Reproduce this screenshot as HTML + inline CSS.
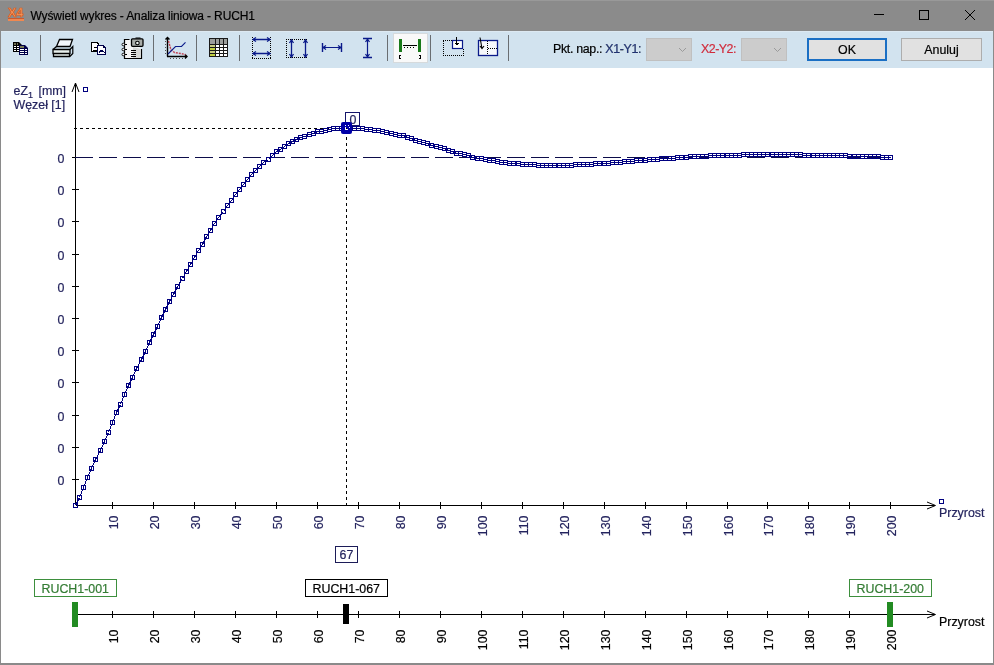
<!DOCTYPE html>
<html><head><meta charset="utf-8"><style>
html,body{margin:0;padding:0}
body{width:994px;height:665px;overflow:hidden;position:relative;background:#8a8a8a;font-family:"Liberation Sans",sans-serif}
#tb{position:absolute;left:1px;top:31px;width:992px;height:37px;background:#d2e3ef;border-top:1px solid #dde9f2;box-sizing:border-box}
#ca{position:absolute;left:1px;top:68px;width:992px;height:595px;background:#fff}
#ttl{position:absolute;left:0;top:0;width:994px;height:31px;background:#8b8b8b;border-top:1px solid #999;box-sizing:border-box}
svg{position:absolute;left:0;top:0;will-change:transform}
svg text{font-family:"Liberation Sans",sans-serif;font-size:12.4px}
.btn{position:absolute;box-sizing:border-box;background:#e1e1e1;font-size:12px;text-align:center;color:#000}
</style></head><body>
<div id="ttl"></div>
<div id="tb"></div>
<div id="ca"></div>
<svg width="994" height="665" viewBox="0 0 994 665">
<!-- title -->
<text x="30.5" y="20" fill="#000" style="font-size:12px;letter-spacing:-0.12px" stroke="#000" stroke-width="0.2">Wyświetl wykres - Analiza liniowa - RUCH1</text>
<path d="M874 14.5h10M919.5 10.5h9v9h-9zM965 10l10 10M975 10l-10 10" stroke="#000" fill="none" shape-rendering="crispEdges"/>
<text x="8" y="16.5" fill="#f59a60" stroke="#d85a20" stroke-width="0.7" style="font-size:12.5px;font-weight:bold">X4</text>
<rect x="8" y="18" width="16" height="1" fill="#c85a30"/><rect x="8" y="19" width="16" height="2" fill="#f08850"/>
<!-- icon1 spreadsheet copy -->
<path d="M13 42h6l3 3v7h-9z" fill="#000"/>
<path d="M14 43h2v2h-2zM17 43h1v2h-1z" fill="#6e6e50"/>
<path d="M14 46h2v1h-2zM17 46h2v1h-2zM14 48h2v1h-2zM17 48h2v1h-2zM14 50h2v1h-2zM17 50h2v1h-2z" fill="#fff"/>
<path d="M19 45h6l3 3v7h-9z" fill="#000048"/>
<path d="M20 46h3v2h-3zM23 46h1v2h-1z" fill="#7a7a50"/>
<path d="M20 49h3v1h-3zM23 49h1v1h-1zM25 49h2v1h-2zM20 51h3v1h-3zM23 51h1v1h-1zM25 51h2v1h-2zM20 53h3v1h-3zM23 53h1v1h-1zM25 53h2v1h-2z" fill="#fff"/>
<!-- icon2 printer -->
<path d="M59.5 39.5h13l-2.5 7h-13.5z" fill="#f4f8fc" stroke="#000" stroke-width="1.3"/>
<path d="M53 49.5h17v4h-17zM53.5 53.5h16v3h-16z" fill="#e8f0ec" stroke="#000" stroke-width="1.3"/>
<path d="M53 49.5l3.5-3M70 49.5l2.8-3v7l-3 3" fill="none" stroke="#000" stroke-width="1.2"/>
<!-- icon3 copy picture -->
<path d="M91.5 42.5h5.5l1.5 1.5v7.5h-7z" fill="#fff" stroke="#000" stroke-width="1.1" shape-rendering="crispEdges"/>
<path d="M94 47.5h3M93 50h4" stroke="#000" shape-rendering="crispEdges"/>
<path d="M97.5 45.5h5.5l2.5 2.5v6.5h-8z" fill="#fff" stroke="#000048" stroke-width="1.1" shape-rendering="crispEdges"/>
<path d="M100 50.5h3M99 52.5l2-1.5h2l2 1.5" stroke="#000048" fill="none" shape-rendering="crispEdges"/>
<rect x="103" y="47" width="1" height="1" fill="#000048"/>
<!-- icon4 notebook camera -->
<path d="M129.5 39.5h-5v19h17v-9.5" fill="#f6f6f6" stroke="#000" stroke-width="1.2"/>
<path d="M133 47v11h8v-9z" fill="#d6d8d6"/>
<path d="M123 44.5h4M123 49.5h4M123 54.5h4" stroke="#000" stroke-width="1.1"/>
<circle cx="123.3" cy="44.5" r="1.3" fill="#fff" stroke="#000" stroke-width="0.9"/><circle cx="123.3" cy="49.5" r="1.3" fill="#fff" stroke="#000" stroke-width="0.9"/><circle cx="123.3" cy="54.5" r="1.3" fill="#fff" stroke="#000" stroke-width="0.9"/>
<path d="M130.5 50.5h5M130.5 52.5h5M130.5 54.5h5M130.5 56.5h5" stroke="#000" shape-rendering="crispEdges"/>
<rect x="131.5" y="38.8" width="11.5" height="7.5" rx="1" fill="#a8aca8" stroke="#000" stroke-width="1.3"/>
<path d="M135.5 38.5h5v-1h-5z" fill="#000"/>
<circle cx="137.4" cy="43" r="1.8" fill="#f0f4f0" stroke="#000" stroke-width="1.1"/>
<!-- icon5 chart -->
<path d="M167.5 37.5v19M167 56.5h20M165.5 39.5l2-2 2 2M185 54.5l2 2-2 2" stroke="#000" stroke-width="1.4" fill="none"/>
<path d="M165 41.5h1M165 44.5h1M165 47.5h1M165 50.5h1M165 53.5h1M170.5 58v1M173.5 58v1M176.5 58v1M179.5 58v1M182.5 58v1" stroke="#555" shape-rendering="crispEdges"/>
<path d="M168.5 41l2.5 9 3.5 2.5 6 1 5 1" stroke="#c04050" stroke-width="1.4" fill="none" stroke-dasharray="2 1"/>
<path d="M168 54l7.5-7.5h6l4-4.2" stroke="#0a1a8a" stroke-width="1.1" fill="none"/>
<!-- icon6 grid -->
<rect x="209" y="38" width="19" height="19" fill="#1a1a1a"/>
<path d="M210 39h5v5h-5zM216 39h3v5h-3zM220 39h3v5h-3zM224 39h3v5h-3z" fill="#9c9e9c"/>
<path d="M210 45h5v2h-5zM210 51h5v2h-5z" fill="#c8cc80"/>
<path d="M210 48h5v2h-5zM210 54h5v2h-5z" fill="#c0d040"/>
<path d="M216 45h3v2h-3zM220 45h3v2h-3zM224 45h3v2h-3zM216 48h3v2h-3zM220 48h3v2h-3zM224 48h3v2h-3zM216 51h3v2h-3zM220 51h3v2h-3zM224 51h3v2h-3zM216 54h3v2h-3zM220 54h3v2h-3zM224 54h3v2h-3z" fill="#fff"/>
<!-- icon7 dotted sq horiz arrows -->
<path d="M252.5 37v22M270.5 37v22M252 58.5h19" stroke="#000" stroke-dasharray="1 1" shape-rendering="crispEdges"/>
<path d="M253 39.5h17M253 53.5h17" stroke="#0a1a8a" stroke-width="1.3"/>
<path d="M256 37.5l-3 2 3 2M267 37.5l3 2-3 2M256 51.5l-3 2 3 2M267 51.5l3 2-3 2" stroke="#0a1a8a" stroke-width="1.3" fill="none"/>
<!-- icon8 dotted sq vert arrows -->
<path d="M286.5 39v19M286 39.5h22M286 57.5h22" stroke="#000" stroke-dasharray="1 1" shape-rendering="crispEdges"/>
<path d="M291.5 40v17M305.5 40v17" stroke="#0a1a8a" stroke-width="1.3"/>
<path d="M289.5 43l2-3 2 3M289.5 54l2 3 2-3M303.5 43l2-3 2 3M303.5 54l2 3 2-3" stroke="#0a1a8a" stroke-width="1.3" fill="none"/>
<!-- icon9 horiz measure -->
<path d="M322.5 43v9M341.5 43v9" stroke="#0a1a8a" stroke-width="1.4"/>
<path d="M323 47.5h18M326 45.5l-3 2 3 2M338 45.5l3 2-3 2" stroke="#0a1a8a" stroke-width="1.2" fill="none"/>
<!-- icon10 vert measure -->
<path d="M363 38.5h9M363 57.5h9" stroke="#0a1a8a" stroke-width="1.4"/>
<path d="M367.5 39v18M365.5 42l2-3 2 3M365.5 54l2 3 2-3" stroke="#0a1a8a" stroke-width="1.2" fill="none"/>
<!-- icon11 pressed -->
<rect x="393.5" y="33.5" width="34" height="29" fill="#f9f9f9" stroke="#d6dadc" shape-rendering="crispEdges"/>
<rect x="399" y="39" width="3" height="13" fill="#1a7a1a"/>
<rect x="418" y="39" width="3" height="13" fill="#1a7a1a"/>
<path d="M403 45.5h14" stroke="#000" shape-rendering="crispEdges"/>
<path d="M404 47h1v1h-1zM407 47h1v1h-1zM410 47h1v1h-1zM413 47h1v1h-1z" fill="#000"/>
<path d="M401 55.5h-1.5v3h1.5M418.5 55.5h1.5v3h-1.5" stroke="#000" fill="none" shape-rendering="crispEdges"/>
<!-- icon12 -->
<path d="M443.5 41v15M443 55.5h20M463 49v7" stroke="#000" stroke-dasharray="1 1" shape-rendering="crispEdges"/>
<path d="M443 40.5h9" stroke="#000" stroke-dasharray="1 1" shape-rendering="crispEdges"/>
<rect x="452.5" y="40.5" width="10" height="8" fill="#fff" stroke="#0a1a8a" stroke-width="1.2"/>
<path d="M456.5 37v8M454.5 43.5h4M455.5 44.5h2" stroke="#000" fill="none" shape-rendering="crispEdges"/>
<!-- icon13 -->
<rect x="478.5" y="40.5" width="19" height="15" fill="#f6f8fc" stroke="#0a1a8a" stroke-width="1.3"/>
<path d="M487.5 41v14M488 48.5h9" stroke="#000" stroke-dasharray="1 1" shape-rendering="crispEdges"/>
<path d="M480 37.5l2 11M480 46l2 2.5 2-2.5" stroke="#000" stroke-width="1.1" fill="none"/>

<!-- separators -->
<path d="M40.5 35v26M153.5 35v26M196.5 35v26M239.5 35v26M387.5 35v26M430.5 35v26M508.5 35v26" stroke="#6a6e72" shape-rendering="crispEdges"/>
<!-- combo + labels -->
<text x="553" y="52.5" fill="#000" style="letter-spacing:-0.32px" stroke="#000" stroke-width="0.2">Pkt. nap.: <tspan fill="#263c8e">X1-Y1:</tspan></text>
<rect x="646.5" y="38.5" width="45" height="22" fill="#cccccc" stroke="#c0c0c0" shape-rendering="crispEdges"/>
<path d="M679 48l3.5 3.5L686 48" stroke="#9a9a9a" fill="none"/>
<text x="701" y="52.5" fill="#d02c3c" style="letter-spacing:-0.5px" stroke="#d02c3c" stroke-width="0.2">X2-Y2:</text>
<rect x="741.5" y="38.5" width="45" height="22" fill="#cccccc" stroke="#c0c0c0" shape-rendering="crispEdges"/>
<path d="M774 48l3.5 3.5L781 48" stroke="#9a9a9a" fill="none"/>
<rect x="808" y="39" width="78" height="21" fill="#e1e1e1" stroke="#1a6fc4" stroke-width="2"/>
<text x="847" y="54" text-anchor="middle" fill="#000" stroke="#000" stroke-width="0.2">OK</text>
<rect x="901.5" y="38.5" width="80" height="22" fill="#e1e1e1" stroke="#adadad" shape-rendering="crispEdges"/>
<text x="941.5" y="54" text-anchor="middle" fill="#000" stroke="#000" stroke-width="0.2">Anuluj</text>
<path d="M75.5 505V84M75.5 505.5H935" stroke="#000" stroke-width="1" fill="none" shape-rendering="crispEdges"/>
<path d="M72 92L75.5 83L79 92" stroke="#000" fill="none"/>
<path d="M927 502L935.5 505.5L927 509" stroke="#000" fill="none"/>
<path d="M72 157.5h7M72 189.5h7M72 221.5h7M72 254.5h7M72 286.5h7M72 318.5h7M72 350.5h7M72 382.5h7M72 415.5h7M72 447.5h7M72 479.5h7" stroke="#000" shape-rendering="crispEdges"/>
<path d="M112.5 502v7M153.5 502v7M194.5 502v7M235.5 502v7M276.5 502v7M317.5 502v7M358.5 502v7M399.5 502v7M440.5 502v7M481.5 502v7M522.5 502v7M563.5 502v7M604.5 502v7M645.5 502v7M686.5 502v7M727.5 502v7M767.5 502v7M808.5 502v7M849.5 502v7M890.5 502v7M112.5 611v7M153.5 611v7M194.5 611v7M235.5 611v7M276.5 611v7M317.5 611v7M358.5 611v7M399.5 611v7M440.5 611v7M481.5 611v7M522.5 611v7M563.5 611v7M604.5 611v7M645.5 611v7M686.5 611v7M727.5 611v7M767.5 611v7M808.5 611v7M849.5 611v7M890.5 611v7" stroke="#000" shape-rendering="crispEdges"/>
<text x="64.5" y="162.5" text-anchor="end" fill="#24245e" stroke="#24245e" stroke-width="0.2">0</text>
<text x="64.5" y="194.5" text-anchor="end" fill="#24245e" stroke="#24245e" stroke-width="0.2">0</text>
<text x="64.5" y="226.5" text-anchor="end" fill="#24245e" stroke="#24245e" stroke-width="0.2">0</text>
<text x="64.5" y="259.5" text-anchor="end" fill="#24245e" stroke="#24245e" stroke-width="0.2">0</text>
<text x="64.5" y="291.5" text-anchor="end" fill="#24245e" stroke="#24245e" stroke-width="0.2">0</text>
<text x="64.5" y="323.5" text-anchor="end" fill="#24245e" stroke="#24245e" stroke-width="0.2">0</text>
<text x="64.5" y="355.5" text-anchor="end" fill="#24245e" stroke="#24245e" stroke-width="0.2">0</text>
<text x="64.5" y="387.5" text-anchor="end" fill="#24245e" stroke="#24245e" stroke-width="0.2">0</text>
<text x="64.5" y="420.5" text-anchor="end" fill="#24245e" stroke="#24245e" stroke-width="0.2">0</text>
<text x="64.5" y="452.5" text-anchor="end" fill="#24245e" stroke="#24245e" stroke-width="0.2">0</text>
<text x="64.5" y="484.5" text-anchor="end" fill="#24245e" stroke="#24245e" stroke-width="0.2">0</text>
<text transform="translate(118.3 515.5) rotate(-90)" text-anchor="end" fill="#24245e" stroke="#24245e" stroke-width="0.2">10</text>
<text transform="translate(118.3 629.5) rotate(-90)" text-anchor="end" fill="#000" stroke="#000" stroke-width="0.2">10</text>
<text transform="translate(159.3 515.5) rotate(-90)" text-anchor="end" fill="#24245e" stroke="#24245e" stroke-width="0.2">20</text>
<text transform="translate(159.3 629.5) rotate(-90)" text-anchor="end" fill="#000" stroke="#000" stroke-width="0.2">20</text>
<text transform="translate(200.3 515.5) rotate(-90)" text-anchor="end" fill="#24245e" stroke="#24245e" stroke-width="0.2">30</text>
<text transform="translate(200.3 629.5) rotate(-90)" text-anchor="end" fill="#000" stroke="#000" stroke-width="0.2">30</text>
<text transform="translate(241.3 515.5) rotate(-90)" text-anchor="end" fill="#24245e" stroke="#24245e" stroke-width="0.2">40</text>
<text transform="translate(241.3 629.5) rotate(-90)" text-anchor="end" fill="#000" stroke="#000" stroke-width="0.2">40</text>
<text transform="translate(282.3 515.5) rotate(-90)" text-anchor="end" fill="#24245e" stroke="#24245e" stroke-width="0.2">50</text>
<text transform="translate(282.3 629.5) rotate(-90)" text-anchor="end" fill="#000" stroke="#000" stroke-width="0.2">50</text>
<text transform="translate(323.3 515.5) rotate(-90)" text-anchor="end" fill="#24245e" stroke="#24245e" stroke-width="0.2">60</text>
<text transform="translate(323.3 629.5) rotate(-90)" text-anchor="end" fill="#000" stroke="#000" stroke-width="0.2">60</text>
<text transform="translate(364.3 515.5) rotate(-90)" text-anchor="end" fill="#24245e" stroke="#24245e" stroke-width="0.2">70</text>
<text transform="translate(364.3 629.5) rotate(-90)" text-anchor="end" fill="#000" stroke="#000" stroke-width="0.2">70</text>
<text transform="translate(405.3 515.5) rotate(-90)" text-anchor="end" fill="#24245e" stroke="#24245e" stroke-width="0.2">80</text>
<text transform="translate(405.3 629.5) rotate(-90)" text-anchor="end" fill="#000" stroke="#000" stroke-width="0.2">80</text>
<text transform="translate(446.3 515.5) rotate(-90)" text-anchor="end" fill="#24245e" stroke="#24245e" stroke-width="0.2">90</text>
<text transform="translate(446.3 629.5) rotate(-90)" text-anchor="end" fill="#000" stroke="#000" stroke-width="0.2">90</text>
<text transform="translate(487.3 515.5) rotate(-90)" text-anchor="end" fill="#24245e" stroke="#24245e" stroke-width="0.2">100</text>
<text transform="translate(487.3 629.5) rotate(-90)" text-anchor="end" fill="#000" stroke="#000" stroke-width="0.2">100</text>
<text transform="translate(528.3 515.5) rotate(-90)" text-anchor="end" fill="#24245e" stroke="#24245e" stroke-width="0.2">110</text>
<text transform="translate(528.3 629.5) rotate(-90)" text-anchor="end" fill="#000" stroke="#000" stroke-width="0.2">110</text>
<text transform="translate(569.3 515.5) rotate(-90)" text-anchor="end" fill="#24245e" stroke="#24245e" stroke-width="0.2">120</text>
<text transform="translate(569.3 629.5) rotate(-90)" text-anchor="end" fill="#000" stroke="#000" stroke-width="0.2">120</text>
<text transform="translate(610.3 515.5) rotate(-90)" text-anchor="end" fill="#24245e" stroke="#24245e" stroke-width="0.2">130</text>
<text transform="translate(610.3 629.5) rotate(-90)" text-anchor="end" fill="#000" stroke="#000" stroke-width="0.2">130</text>
<text transform="translate(651.3 515.5) rotate(-90)" text-anchor="end" fill="#24245e" stroke="#24245e" stroke-width="0.2">140</text>
<text transform="translate(651.3 629.5) rotate(-90)" text-anchor="end" fill="#000" stroke="#000" stroke-width="0.2">140</text>
<text transform="translate(692.3 515.5) rotate(-90)" text-anchor="end" fill="#24245e" stroke="#24245e" stroke-width="0.2">150</text>
<text transform="translate(692.3 629.5) rotate(-90)" text-anchor="end" fill="#000" stroke="#000" stroke-width="0.2">150</text>
<text transform="translate(733.3 515.5) rotate(-90)" text-anchor="end" fill="#24245e" stroke="#24245e" stroke-width="0.2">160</text>
<text transform="translate(733.3 629.5) rotate(-90)" text-anchor="end" fill="#000" stroke="#000" stroke-width="0.2">160</text>
<text transform="translate(773.3 515.5) rotate(-90)" text-anchor="end" fill="#24245e" stroke="#24245e" stroke-width="0.2">170</text>
<text transform="translate(773.3 629.5) rotate(-90)" text-anchor="end" fill="#000" stroke="#000" stroke-width="0.2">170</text>
<text transform="translate(814.3 515.5) rotate(-90)" text-anchor="end" fill="#24245e" stroke="#24245e" stroke-width="0.2">180</text>
<text transform="translate(814.3 629.5) rotate(-90)" text-anchor="end" fill="#000" stroke="#000" stroke-width="0.2">180</text>
<text transform="translate(855.3 515.5) rotate(-90)" text-anchor="end" fill="#24245e" stroke="#24245e" stroke-width="0.2">190</text>
<text transform="translate(855.3 629.5) rotate(-90)" text-anchor="end" fill="#000" stroke="#000" stroke-width="0.2">190</text>
<text transform="translate(896.3 515.5) rotate(-90)" text-anchor="end" fill="#24245e" stroke="#24245e" stroke-width="0.2">200</text>
<text transform="translate(896.3 629.5) rotate(-90)" text-anchor="end" fill="#000" stroke="#000" stroke-width="0.2">200</text>
<path d="M75 157.5H890" stroke="#0c0c4a" stroke-dasharray="18 6" shape-rendering="crispEdges"/>
<path d="M74 128.5H346M346.5 131V505" stroke="#000" stroke-dasharray="3 3" shape-rendering="crispEdges"/>
<path d="M75.5 505.5 L79.5 497.5 L83.5 487.5 L87.5 477.5 L91.5 468.5 L95.5 459.5 L100.5 450.5 L104.5 441.5 L108.5 432.5 L112.5 422.5 L116.5 412.5 L120.5 404.5 L124.5 394.5 L128.5 385.5 L132.5 377.5 L136.5 368.5 L141.5 359.5 L145.5 351.5 L149.5 342.5 L153.5 334.5 L157.5 326.5 L161.5 317.5 L165.5 309.5 L169.5 301.5 L173.5 294.5 L177.5 286.5 L182.5 278.5 L186.5 271.5 L190.5 264.5 L194.5 257.5 L198.5 250.5 L202.5 244.5 L206.5 236.5 L210.5 230.5 L214.5 223.5 L218.5 217.5 L223.5 211.5 L227.5 205.5 L231.5 200.5 L235.5 194.5 L239.5 189.5 L243.5 184.5 L247.5 179.5 L251.5 174.5 L255.5 170.5 L259.5 166.5 L263.5 162.5 L268.5 159.5 L272.5 155.5 L276.5 151.5 L280.5 149.5 L284.5 146.5 L288.5 143.5 L292.5 141.5 L296.5 139.5 L300.5 137.5 L304.5 136.5 L309.5 134.5 L313.5 133.5 L317.5 131.5 L321.5 131.5 L325.5 130.5 L329.5 129.5 L333.5 128.5 L337.5 128.5 L341.5 128.5 L345.5 128.5 L350.5 128.5 L354.5 128.5 L358.5 128.5 L362.5 128.5 L366.5 129.5 L370.5 129.5 L374.5 130.5 L378.5 130.5 L382.5 131.5 L386.5 132.5 L391.5 133.5 L395.5 134.5 L399.5 135.5 L403.5 135.5 L407.5 137.5 L411.5 138.5 L415.5 140.5 L419.5 141.5 L423.5 142.5 L427.5 143.5 L431.5 145.5 L436.5 146.5 L440.5 147.5 L444.5 148.5 L448.5 150.5 L452.5 151.5 L456.5 153.5 L460.5 153.5 L464.5 154.5 L468.5 155.5 L472.5 157.5 L477.5 158.5 L481.5 158.5 L485.5 159.5 L489.5 160.5 L493.5 160.5 L497.5 161.5 L501.5 162.5 L505.5 162.5 L509.5 163.5 L513.5 163.5 L518.5 163.5 L522.5 164.5 L526.5 164.5 L530.5 164.5 L534.5 164.5 L538.5 165.5 L542.5 165.5 L546.5 165.5 L550.5 165.5 L554.5 165.5 L559.5 165.5 L563.5 165.5 L567.5 165.5 L571.5 165.5 L575.5 164.5 L579.5 164.5 L583.5 164.5 L587.5 164.5 L591.5 164.5 L595.5 163.5 L599.5 163.5 L604.5 163.5 L608.5 163.5 L612.5 162.5 L616.5 162.5 L620.5 162.5 L624.5 161.5 L628.5 161.5 L632.5 161.5 L636.5 160.5 L640.5 160.5 L645.5 160.5 L649.5 159.5 L653.5 159.5 L657.5 159.5 L661.5 158.5 L665.5 158.5 L669.5 158.5 L673.5 158.5 L677.5 157.5 L681.5 157.5 L686.5 157.5 L690.5 156.5 L694.5 156.5 L698.5 156.5 L702.5 156.5 L706.5 156.5 L710.5 155.5 L714.5 155.5 L718.5 155.5 L722.5 155.5 L727.5 155.5 L731.5 155.5 L735.5 155.5 L739.5 155.5 L743.5 154.5 L747.5 154.5 L751.5 154.5 L755.5 154.5 L759.5 154.5 L763.5 154.5 L767.5 154.5 L772.5 154.5 L776.5 154.5 L780.5 154.5 L784.5 154.5 L788.5 154.5 L792.5 154.5 L796.5 154.5 L800.5 154.5 L804.5 155.5 L808.5 155.5 L813.5 155.5 L817.5 155.5 L821.5 155.5 L825.5 155.5 L829.5 155.5 L833.5 155.5 L837.5 155.5 L841.5 155.5 L845.5 155.5 L849.5 156.5 L854.5 156.5 L858.5 156.5 L862.5 156.5 L866.5 156.5 L870.5 156.5 L874.5 156.5 L878.5 156.5 L882.5 157.5 L886.5 157.5 L890.5 157.5" stroke="#000080" fill="none" shape-rendering="crispEdges"/>
<path d="M73.5 503.5h4v4h-4zM77.5 495.5h4v4h-4zM81.5 485.5h4v4h-4zM85.5 475.5h4v4h-4zM89.5 466.5h4v4h-4zM93.5 457.5h4v4h-4zM98.5 448.5h4v4h-4zM102.5 439.5h4v4h-4zM106.5 430.5h4v4h-4zM110.5 420.5h4v4h-4zM114.5 410.5h4v4h-4zM118.5 402.5h4v4h-4zM122.5 392.5h4v4h-4zM126.5 383.5h4v4h-4zM130.5 375.5h4v4h-4zM134.5 366.5h4v4h-4zM139.5 357.5h4v4h-4zM143.5 349.5h4v4h-4zM147.5 340.5h4v4h-4zM151.5 332.5h4v4h-4zM155.5 324.5h4v4h-4zM159.5 315.5h4v4h-4zM163.5 307.5h4v4h-4zM167.5 299.5h4v4h-4zM171.5 292.5h4v4h-4zM175.5 284.5h4v4h-4zM180.5 276.5h4v4h-4zM184.5 269.5h4v4h-4zM188.5 262.5h4v4h-4zM192.5 255.5h4v4h-4zM196.5 248.5h4v4h-4zM200.5 242.5h4v4h-4zM204.5 234.5h4v4h-4zM208.5 228.5h4v4h-4zM212.5 221.5h4v4h-4zM216.5 215.5h4v4h-4zM221.5 209.5h4v4h-4zM225.5 203.5h4v4h-4zM229.5 198.5h4v4h-4zM233.5 192.5h4v4h-4zM237.5 187.5h4v4h-4zM241.5 182.5h4v4h-4zM245.5 177.5h4v4h-4zM249.5 172.5h4v4h-4zM253.5 168.5h4v4h-4zM257.5 164.5h4v4h-4zM261.5 160.5h4v4h-4zM266.5 157.5h4v4h-4zM270.5 153.5h4v4h-4zM274.5 149.5h4v4h-4zM278.5 147.5h4v4h-4zM282.5 144.5h4v4h-4zM286.5 141.5h4v4h-4zM290.5 139.5h4v4h-4zM294.5 137.5h4v4h-4zM298.5 135.5h4v4h-4zM302.5 134.5h4v4h-4zM307.5 132.5h4v4h-4zM311.5 131.5h4v4h-4zM315.5 129.5h4v4h-4zM319.5 129.5h4v4h-4zM323.5 128.5h4v4h-4zM327.5 127.5h4v4h-4zM331.5 126.5h4v4h-4zM335.5 126.5h4v4h-4zM339.5 126.5h4v4h-4zM343.5 126.5h4v4h-4zM348.5 126.5h4v4h-4zM352.5 126.5h4v4h-4zM356.5 126.5h4v4h-4zM360.5 126.5h4v4h-4zM364.5 127.5h4v4h-4zM368.5 127.5h4v4h-4zM372.5 128.5h4v4h-4zM376.5 128.5h4v4h-4zM380.5 129.5h4v4h-4zM384.5 130.5h4v4h-4zM389.5 131.5h4v4h-4zM393.5 132.5h4v4h-4zM397.5 133.5h4v4h-4zM401.5 133.5h4v4h-4zM405.5 135.5h4v4h-4zM409.5 136.5h4v4h-4zM413.5 138.5h4v4h-4zM417.5 139.5h4v4h-4zM421.5 140.5h4v4h-4zM425.5 141.5h4v4h-4zM429.5 143.5h4v4h-4zM434.5 144.5h4v4h-4zM438.5 145.5h4v4h-4zM442.5 146.5h4v4h-4zM446.5 148.5h4v4h-4zM450.5 149.5h4v4h-4zM454.5 151.5h4v4h-4zM458.5 151.5h4v4h-4zM462.5 152.5h4v4h-4zM466.5 153.5h4v4h-4zM470.5 155.5h4v4h-4zM475.5 156.5h4v4h-4zM479.5 156.5h4v4h-4zM483.5 157.5h4v4h-4zM487.5 158.5h4v4h-4zM491.5 158.5h4v4h-4zM495.5 159.5h4v4h-4zM499.5 160.5h4v4h-4zM503.5 160.5h4v4h-4zM507.5 161.5h4v4h-4zM511.5 161.5h4v4h-4zM516.5 161.5h4v4h-4zM520.5 162.5h4v4h-4zM524.5 162.5h4v4h-4zM528.5 162.5h4v4h-4zM532.5 162.5h4v4h-4zM536.5 163.5h4v4h-4zM540.5 163.5h4v4h-4zM544.5 163.5h4v4h-4zM548.5 163.5h4v4h-4zM552.5 163.5h4v4h-4zM557.5 163.5h4v4h-4zM561.5 163.5h4v4h-4zM565.5 163.5h4v4h-4zM569.5 163.5h4v4h-4zM573.5 162.5h4v4h-4zM577.5 162.5h4v4h-4zM581.5 162.5h4v4h-4zM585.5 162.5h4v4h-4zM589.5 162.5h4v4h-4zM593.5 161.5h4v4h-4zM597.5 161.5h4v4h-4zM602.5 161.5h4v4h-4zM606.5 161.5h4v4h-4zM610.5 160.5h4v4h-4zM614.5 160.5h4v4h-4zM618.5 160.5h4v4h-4zM622.5 159.5h4v4h-4zM626.5 159.5h4v4h-4zM630.5 159.5h4v4h-4zM634.5 158.5h4v4h-4zM638.5 158.5h4v4h-4zM643.5 158.5h4v4h-4zM647.5 157.5h4v4h-4zM651.5 157.5h4v4h-4zM655.5 157.5h4v4h-4zM659.5 156.5h4v4h-4zM663.5 156.5h4v4h-4zM667.5 156.5h4v4h-4zM671.5 156.5h4v4h-4zM675.5 155.5h4v4h-4zM679.5 155.5h4v4h-4zM684.5 155.5h4v4h-4zM688.5 154.5h4v4h-4zM692.5 154.5h4v4h-4zM696.5 154.5h4v4h-4zM700.5 154.5h4v4h-4zM704.5 154.5h4v4h-4zM708.5 153.5h4v4h-4zM712.5 153.5h4v4h-4zM716.5 153.5h4v4h-4zM720.5 153.5h4v4h-4zM725.5 153.5h4v4h-4zM729.5 153.5h4v4h-4zM733.5 153.5h4v4h-4zM737.5 153.5h4v4h-4zM741.5 152.5h4v4h-4zM745.5 152.5h4v4h-4zM749.5 152.5h4v4h-4zM753.5 152.5h4v4h-4zM757.5 152.5h4v4h-4zM761.5 152.5h4v4h-4zM765.5 152.5h4v4h-4zM770.5 152.5h4v4h-4zM774.5 152.5h4v4h-4zM778.5 152.5h4v4h-4zM782.5 152.5h4v4h-4zM786.5 152.5h4v4h-4zM790.5 152.5h4v4h-4zM794.5 152.5h4v4h-4zM798.5 152.5h4v4h-4zM802.5 153.5h4v4h-4zM806.5 153.5h4v4h-4zM811.5 153.5h4v4h-4zM815.5 153.5h4v4h-4zM819.5 153.5h4v4h-4zM823.5 153.5h4v4h-4zM827.5 153.5h4v4h-4zM831.5 153.5h4v4h-4zM835.5 153.5h4v4h-4zM839.5 153.5h4v4h-4zM843.5 153.5h4v4h-4zM847.5 154.5h4v4h-4zM852.5 154.5h4v4h-4zM856.5 154.5h4v4h-4zM860.5 154.5h4v4h-4zM864.5 154.5h4v4h-4zM868.5 154.5h4v4h-4zM872.5 154.5h4v4h-4zM876.5 154.5h4v4h-4zM880.5 155.5h4v4h-4zM884.5 155.5h4v4h-4zM888.5 155.5h4v4h-4z" stroke="#000080" fill="none" shape-rendering="crispEdges"/>
<rect x="345.5" y="112.5" width="14" height="13" fill="#fff" stroke="#14146a" shape-rendering="crispEdges"/>
<text x="349.5" y="124" fill="#24245e" stroke="#24245e" stroke-width="0.2">0</text>
<rect x="341" y="122" width="11" height="12" rx="2" fill="#0000a8"/>
<path d="M345 125h1M348 125h1M349 127v1M345 127v2h3" stroke="#fff" shape-rendering="crispEdges"/>
<rect x="83.5" y="87.5" width="4" height="4" fill="none" stroke="#000080" shape-rendering="crispEdges"/>
<rect x="939.5" y="499.5" width="4" height="4" fill="none" stroke="#000080" shape-rendering="crispEdges"/>
<text x="939" y="517" fill="#24245e" stroke="#24245e" stroke-width="0.2">Przyrost</text>
<text x="13.5" y="95" fill="#24245e" stroke="#24245e" stroke-width="0.2">eZ<tspan font-size="9" dy="3">1</tspan><tspan x="38.5" dy="-3">[mm]</tspan></text>
<text x="13.5" y="109" fill="#24245e" stroke="#24245e" stroke-width="0.2">Węzeł [1]</text>
<rect x="335.5" y="546.5" width="22" height="16" fill="#fff" stroke="#1c1c58" shape-rendering="crispEdges"/>
<text x="339.5" y="559" fill="#24245e" stroke="#24245e" stroke-width="0.2">67</text>
<path d="M75 614.5H935" stroke="#000" shape-rendering="crispEdges"/>
<path d="M927 611L935.5 614.5L927 618" stroke="#000" fill="none"/>
<text x="939" y="626" fill="#000" stroke="#000" stroke-width="0.2">Przyrost</text>
<rect x="34.5" y="579.5" width="82" height="17" fill="#fff" stroke="#3d8f3d" shape-rendering="crispEdges"/>
<text x="41.5" y="592.5" fill="#347c34" stroke="#347c34" stroke-width="0.2">RUCH1-001</text>
<rect x="849.5" y="579.5" width="82" height="17" fill="#fff" stroke="#3d8f3d" shape-rendering="crispEdges"/>
<text x="856.5" y="592.5" fill="#347c34" stroke="#347c34" stroke-width="0.2">RUCH1-200</text>
<rect x="305.5" y="579.5" width="82" height="17" fill="#fff" stroke="#000" shape-rendering="crispEdges"/>
<text x="312.5" y="592.5" fill="#000" stroke="#000" stroke-width="0.2">RUCH1-067</text>
<rect x="72" y="602" width="6" height="25" fill="#228b22"/>
<rect x="887" y="602" width="6" height="25" fill="#228b22"/>
<rect x="343" y="604" width="6" height="20" fill="#000"/>
</svg>
</body></html>
